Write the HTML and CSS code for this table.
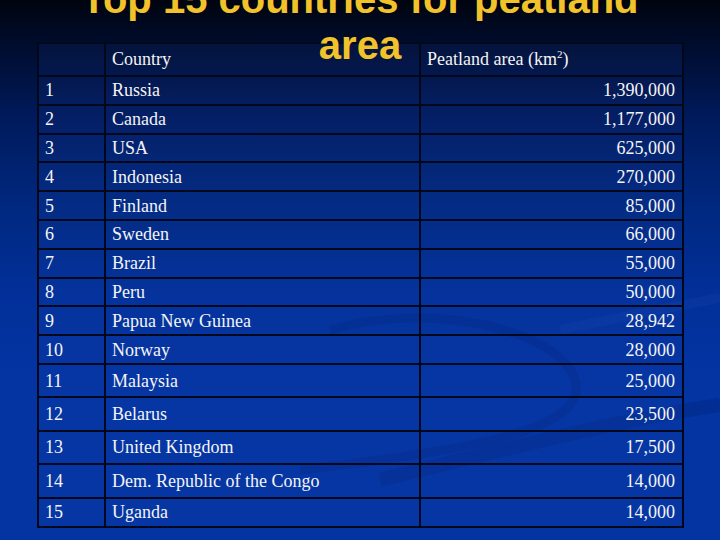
FILE: index.html
```html
<!DOCTYPE html>
<html>
<head>
<meta charset="utf-8">
<link rel="stylesheet" href="styles.css">
</head>
<body>
<div class="slide">
  <svg class="swoosh" width="720" height="540" viewBox="0 0 720 540">
    <path d="M330 330 C 430 300, 560 330, 575 380 C 590 430, 470 450, 300 470" fill="none" stroke="rgba(0,20,90,0.16)" stroke-width="9"/>
    <path d="M380 480 C 500 450, 620 420, 720 405" fill="none" stroke="rgba(0,20,90,0.18)" stroke-width="14"/>
    <path d="M560 330 C 620 318, 680 305, 720 298" fill="none" stroke="rgba(60,100,200,0.1)" stroke-width="10"/>
  </svg>
  <table class="data">
    <tr class="head">
      <td class="num"></td>
      <td class="name">Country</td>
      <td class="area-h">Peatland area (km<sup>2</sup>)</td>
    </tr>
    <tr class="r"><td class="num">1</td><td class="name">Russia</td><td class="val">1,390,000</td></tr>
    <tr class="r"><td class="num">2</td><td class="name">Canada</td><td class="val">1,177,000</td></tr>
    <tr class="r"><td class="num">3</td><td class="name">USA</td><td class="val">625,000</td></tr>
    <tr class="r"><td class="num">4</td><td class="name">Indonesia</td><td class="val">270,000</td></tr>
    <tr class="r"><td class="num">5</td><td class="name">Finland</td><td class="val">85,000</td></tr>
    <tr class="r"><td class="num">6</td><td class="name">Sweden</td><td class="val">66,000</td></tr>
    <tr class="r"><td class="num">7</td><td class="name">Brazil</td><td class="val">55,000</td></tr>
    <tr class="r"><td class="num">8</td><td class="name">Peru</td><td class="val">50,000</td></tr>
    <tr class="r"><td class="num">9</td><td class="name">Papua New Guinea</td><td class="val">28,942</td></tr>
    <tr class="r"><td class="num">10</td><td class="name">Norway</td><td class="val">28,000</td></tr>
    <tr class="t"><td class="num">11</td><td class="name">Malaysia</td><td class="val">25,000</td></tr>
    <tr class="t"><td class="num">12</td><td class="name">Belarus</td><td class="val">23,500</td></tr>
    <tr class="t"><td class="num">13</td><td class="name">United Kingdom</td><td class="val">17,500</td></tr>
    <tr class="t"><td class="num">14</td><td class="name">Dem. Republic of the Congo</td><td class="val">14,000</td></tr>
    <tr class="last"><td class="num">15</td><td class="name">Uganda</td><td class="val">14,000</td></tr>
  </table>
  <h1 class="title">Top 15 countries for peatland<br>area</h1>
</div>
</body>
</html>
```
FILE: styles.css
```css
html, body {
  margin: 0;
  padding: 0;
}
body {
  width: 720px;
  height: 540px;
  overflow: hidden;
}
.slide {
  position: relative;
  width: 720px;
  height: 540px;
  overflow: hidden;
  padding-top: 42px;
  box-sizing: border-box;
  background: linear-gradient(to bottom, #00040f 0%, #000c2c 8%, #001a5c 22%, #00287f 38%, #02309a 55%, #0334a2 70%, #0334a2 100%);
}
.swoosh {
  position: absolute;
  left: 0;
  top: 0;
}
.data {
  position: relative;
  margin-left: 37px;
  width: 647px;
  border-collapse: collapse;
  border: 2px solid #01081c;
  font-family: "Liberation Serif", "Times New Roman", serif;
  font-size: 18px;
  color: #f4f4f4;
  table-layout: fixed;
}
.data td {
  border: 2px solid #01081c;
  padding: 0 7px 0 6px;
  vertical-align: middle;
  background: rgba(30, 70, 180, 0.12);
  white-space: nowrap;
  line-height: 20px;
}
.data td.num { width: 52px; }
.data td.name { width: 300px; }
.data td.val { text-align: right; }
.data sup {
  font-size: 11px;
  line-height: 0;
  vertical-align: 7px;
}
.head { height: 33px; }
.head td { vertical-align: top; padding-top: 5px; }
.r { height: 28.8px; }
.t { height: 33.4px; }
.last { height: 29.5px; }
.title {
  position: absolute;
  top: -24px;
  left: 0;
  width: 720px;
  margin: 0;
  text-align: center;
  font-family: "Liberation Sans", Arial, sans-serif;
  font-weight: bold;
  font-size: 40px;
  line-height: 46px;
  color: #f2c22a;
}
```
